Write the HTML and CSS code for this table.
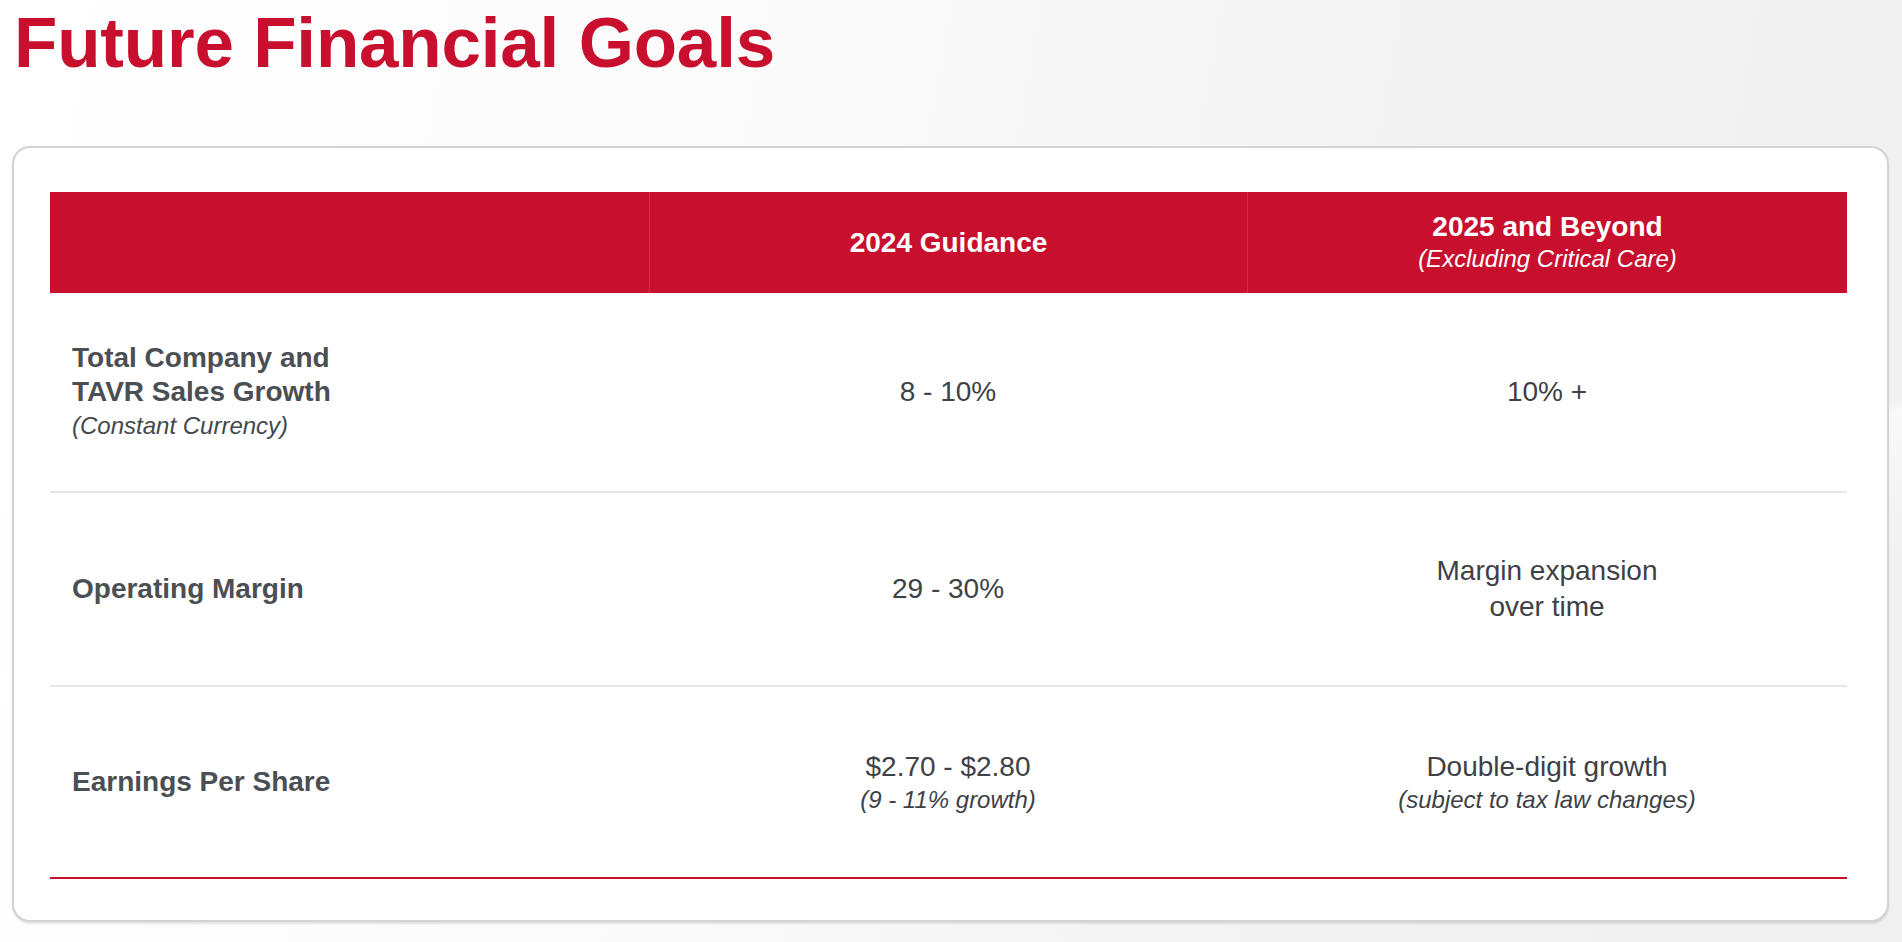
FILE: index.html
```html
<!DOCTYPE html>
<html lang="en">
<head>
<meta charset="utf-8">
<title>Future Financial Goals</title>
<link rel="stylesheet" href="styles.css">
</head>
<body>
<div class="page">
  <h1 class="title">Future Financial Goals</h1>
  <div class="card">
    <div class="table">
      <div class="row head">
        <div class="cell"></div>
        <div class="cell center divider"><span class="hmain">2024 Guidance</span></div>
        <div class="cell center divider"><span class="hmain">2025 and Beyond</span><span class="hsub">(Excluding Critical Care)</span></div>
      </div>
      <div class="row r1">
        <div class="cell label"><span class="lmain">Total Company and<br>TAVR Sales Growth</span><span class="lsub">(Constant Currency)</span></div>
        <div class="cell center"><span class="val">8 - 10%</span></div>
        <div class="cell center"><span class="val">10% +</span></div>
      </div>
      <div class="row r2">
        <div class="cell label"><span class="lmain">Operating Margin</span></div>
        <div class="cell center"><span class="val">29 - 30%</span></div>
        <div class="cell center"><span class="val">Margin expansion<br>over time</span></div>
      </div>
      <div class="row r3 last">
        <div class="cell label"><span class="lmain">Earnings Per Share</span></div>
        <div class="cell center"><span class="val">$2.70 - $2.80</span><span class="vsub">(9 - 11% growth)</span></div>
        <div class="cell center"><span class="val">Double-digit growth</span><span class="vsub">(subject to tax law changes)</span></div>
      </div>
    </div>
  </div>
</div>
</body>
</html>
```

FILE: styles.css
```css
html, body {
  margin: 0;
  padding: 0;
}
body {
  width: 1902px;
  height: 942px;
  overflow: hidden;
  font-family: "Liberation Sans", Arial, Helvetica, sans-serif;
  background:
    linear-gradient(172deg, rgba(255,255,255,0) 0%, rgba(255,255,255,0) 55%, rgba(255,255,255,0.6) 56%, rgba(255,255,255,0) 70%),
    linear-gradient(100deg, #ffffff 0%, #fbfbfb 35%, #f3f3f3 70%, #f0f0f0 100%);
}
.page {
  padding: 7px 13px 0 12px;
  display: flex;
  flex-direction: column;
}
.title {
  margin: 0;
  padding-left: 2px;
  font-size: 71px;
  line-height: 71px;
  font-weight: 700;
  color: #c8102e;
  letter-spacing: -0.2px;
}
.card {
  margin-top: 68px;
  height: 776px;
  box-sizing: border-box;
  background: #ffffff;
  border: 2px solid #d3d3d3;
  border-radius: 18px;
  box-shadow: 0 2px 2px rgba(0,0,0,0.10);
  padding: 44px 40px 0 36px;
}
.table {
  display: flex;
  flex-direction: column;
}
.row {
  display: grid;
  grid-template-columns: 599px 598px 600px;
  border-bottom: 2px solid #e6e6e6;
}
.row.head {
  height: 101px;
  background: #c8102e;
  border-bottom: none;
  color: #ffffff;
}
.row.r1 { height: 198px; }
.row.r2 { height: 192px; }
.row.r3 { height: 190px; }
.row.last { border-bottom: 2px solid #c8102e; }
.cell {
  display: flex;
  flex-direction: column;
  justify-content: center;
}
.cell.center {
  align-items: center;
  text-align: center;
}
.cell.divider {
  border-left: 1px solid rgba(255,255,255,0.13);
}
.hmain {
  font-size: 28px;
  font-weight: 700;
  line-height: 32px;
}
.hsub {
  font-size: 24px;
  font-style: italic;
  line-height: 32px;
}
.label {
  padding-left: 22px;
  color: #4b4f54;
}
.lmain {
  font-size: 28px;
  font-weight: 700;
  line-height: 34px;
}
.lsub {
  font-size: 24px;
  font-style: italic;
  line-height: 34px;
  color: #44484d;
}
.val {
  font-size: 28px;
  line-height: 36px;
  color: #3e4145;
}
.vsub {
  font-size: 24px;
  font-style: italic;
  line-height: 30px;
  color: #3e4145;
}
```
